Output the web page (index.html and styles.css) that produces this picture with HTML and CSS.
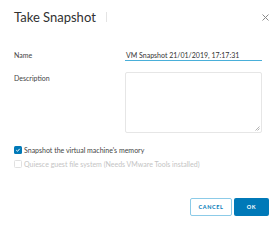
FILE: index.html
```html
<!DOCTYPE html>
<html>
<head>
<meta charset="utf-8">
<link rel="stylesheet" href="styles.css">
</head>
<body>
<div class="dialog">
  <div class="header">
    <div class="title">Take Snapshot</div>
    <div class="sep"></div>
    <div class="spacer"></div>
    <svg class="close" width="7" height="7" viewBox="0 0 7 7"><path d="M0.5 0.5 L6.5 6.5 M6.5 0.5 L0.5 6.5" stroke="#8a8a8a" stroke-width="1"/></svg>
  </div>
  <div class="form">
    <div class="row name-row">
      <div class="label">Name</div>
      <div class="input">VM Snapshot 21/01/2019, 17:17:31</div>
    </div>
    <div class="row desc-row">
      <div class="label">Description</div>
      <div class="textarea">
        <svg class="grip" width="5" height="5" viewBox="0 0 5 5"><path d="M4.5 0.5 L0.5 4.5 M4.5 2.5 L2.5 4.5" stroke="#a0a0a0" stroke-width="0.8"/></svg>
      </div>
    </div>
    <div class="check checked">
      <span class="box"><svg width="8" height="8" viewBox="0 0 8 8"><path d="M2.3 4.2 L3.5 5.3 L5.7 2.8" fill="none" stroke="#fff" stroke-width="1"/></svg></span>
      <span class="ctext">Snapshot the virtual machine's memory</span>
    </div>
    <div class="check disabled">
      <span class="box"></span>
      <span class="ctext">Quiesce guest file system (Needs VMware Tools installed)</span>
    </div>
  </div>
  <div class="footer">
    <div class="btn cancel">CANCEL</div>
    <div class="btn ok">OK</div>
  </div>
</div>
</body>
</html>
```
FILE: styles.css
```css
html, body {
  margin: 0;
  padding: 0;
  background: #fff;
}
body {
  font-family: "Lato", "Open Sans", sans-serif;
  color: #333;
  width: 279px;
  height: 225px;
  overflow: hidden;
}
.dialog {
  padding: 0 10px 0 14px;
}
.header {
  display: flex;
  align-items: center;
  height: 34px;
}
.title {
  font-size: 13px;
  color: #313131;
  line-height: 16px;
}
.sep {
  width: 1px;
  height: 10px;
  background: #e4e4e4;
  margin-left: 10px;
}
.spacer { flex: 1; }
.close {
  margin-right: 0;
}
.form {
  margin-top: 16px;
}
.row {
  display: grid;
  grid-template-columns: 111px 137px;
}
.label {
  font-size: 7px;
  color: #444;
  line-height: 9px;
}
.name-row {
  align-items: start;
}
.name-row .label {
  margin-top: 1px;
}
.input {
  font-size: 7px;
  color: #333;
  line-height: 10px;
  padding-left: 1px;
  border-bottom: 1px solid #49afd9;
  height: 10px;
}
.desc-row {
  margin-top: 11px;
}
.desc-row .label {
  margin-top: 2px;
}
.textarea {
  height: 59px;
  border: 1px solid #e6e6e6;
  border-radius: 2px;
  position: relative;
}
.grip {
  position: absolute;
  right: 1px;
  bottom: 1px;
}
.check {
  display: flex;
  align-items: center;
  height: 8px;
  font-size: 7px;
  line-height: 8px;
}
.checked {
  margin-top: 13px;
  color: #444;
}
.disabled {
  margin-top: 6px;
  color: #c4c4c4;
}
.box {
  width: 8px;
  height: 8px;
  box-sizing: border-box;
  border-radius: 1.5px;
  margin-right: 2px;
  display: flex;
}
.checked .box {
  background: #0079b8;
}
.disabled .box {
  border: 1px solid #e0e0e0;
}
.footer {
  display: flex;
  justify-content: flex-end;
  gap: 2px;
  margin-top: 30px;
}
.btn {
  height: 18px;
  box-sizing: border-box;
  display: flex;
  align-items: center;
  justify-content: center;
  font-size: 5.5px;
  font-weight: 700;
  letter-spacing: 0.6px;
  border-radius: 2px;
}
.cancel {
  width: 42px;
  border: 1px solid #8ccbe8;
  color: #0079b8;
}
.ok {
  width: 35px;
  background: #0079b8;
  color: #fff;
}
```
